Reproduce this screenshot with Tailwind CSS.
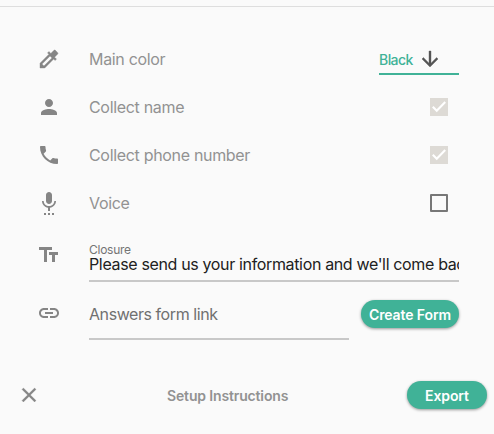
<!DOCTYPE html>
<html lang="en">
<head>
<meta charset="utf-8">
<title>Form settings</title>
<script src="https://cdn.jsdelivr.net/npm/@tailwindcss/browser@4"></script>
</head>
<body class="h-[434px] w-[494px] overflow-hidden bg-[#fafafa] font-[Inter,Roboto,sans-serif] text-[#929292]">
<div class="h-[7px] border-b border-[#dedede]"></div>
<main class="flex flex-col pl-[37px] pr-[35px] pt-7 text-base tracking-[-0.32px]">
  <div class="flex h-12 items-center">
    <svg class="size-6 fill-[#858585] stroke-[#858585] stroke-[0.4]" viewBox="0 0 24 24"><path d="M20.71 5.63l-2.34-2.34c-.39-.39-1.02-.39-1.41 0l-3.12 3.12-1.93-1.91-1.41 1.41 1.42 1.42L3 16.25V21h4.75l8.92-8.92 1.42 1.42 1.41-1.41-1.92-1.92 3.12-3.12c.4-.4.4-1.03.01-1.42zM6.92 19L5 17.08l8.06-8.06 1.92 1.92L6.92 19z"/></svg>
    <span class="ml-7 flex-1">Main color</span>
    <div class="flex h-8 w-20 items-center border-b-2 border-[#40b297] pt-0.5">
      <span class="w-[39px] whitespace-nowrap pt-px text-sm font-medium tracking-[-0.55px] text-[#40b297]">Black</span>
      <svg class="size-6 fill-[#555] stroke-[#555] stroke-[0.4]" viewBox="0 0 24 24"><path d="M20 12l-1.41-1.41L13 16.17V4h-2v12.17l-5.58-5.59L4 12l8 8 8-8z"/></svg>
    </div>
  </div>
  <div class="flex h-12 items-center pr-[11px]">
    <svg class="size-6 fill-[#858585]" viewBox="0 0 24 24"><path d="M12 12c2.21 0 4-1.79 4-4s-1.79-4-4-4-4 1.79-4 4 1.79 4 4 4zm0 2c-2.67 0-8 1.34-8 4v2h16v-2c0-2.66-5.33-4-8-4z"/></svg>
    <span class="ml-7 flex-1">Collect name</span>
    <svg class="size-[18px] bg-[#dddad5]" viewBox="0 0 24 24" fill="none" stroke="#fff" stroke-width="2.8"><path d="M3.7 11.6l5.3 5.3L20.3 5.2"/></svg>
  </div>
  <div class="flex h-12 items-center pr-[11px]">
    <svg class="size-6 fill-[#858585]" viewBox="0 0 24 24"><path d="M6.62 10.79c1.44 2.83 3.76 5.14 6.59 6.59l2.2-2.2c.27-.27.67-.36 1.02-.24 1.12.37 2.33.57 3.57.57.55 0 1 .45 1 1V20c0 .55-.45 1-1 1-9.39 0-17-7.61-17-17 0-.55.45-1 1-1h3.5c.55 0 1 .45 1 1 0 1.25.2 2.45.57 3.57.11.35.03.74-.25 1.02l-2.2 2.2z"/></svg>
    <span class="ml-7 flex-1">Collect phone number</span>
    <svg class="size-[18px] bg-[#dddad5]" viewBox="0 0 24 24" fill="none" stroke="#fff" stroke-width="2.8"><path d="M3.7 11.6l5.3 5.3L20.3 5.2"/></svg>
  </div>
  <div class="flex h-12 items-center pr-[11px]">
    <svg class="size-6 fill-[#858585]" viewBox="0 0 24 24"><path d="M7 24h2v-2H7v2zm5-11c1.66 0 2.99-1.34 2.99-3L15 4c0-1.66-1.34-3-3-3S9 2.34 9 4v6c0 1.66 1.34 3 3 3zm-1 11h2v-2h-2v2zm4 0h2v-2h-2v2zm4-14h-1.7c0 3-2.54 5.1-5.3 5.1S6.7 13 6.7 10H5c0 3.41 2.72 6.23 6 6.72V20h2v-3.28c3.28-.49 6-3.31 6-6.72z"/></svg>
    <span class="ml-7 flex-1">Voice</span>
    <span class="size-[18px] rounded-[1px] border-2 border-[#777]"></span>
  </div>
  <div class="flex h-[55px] items-start">
    <svg class="mt-4 size-6 shrink-0 fill-[#858585]" viewBox="0 0 24 24"><path d="M2 4v3h5v12h3V7h5V4H2zm19 5h-9v3h3v7h3v-7h3V9z"/></svg>
    <div class="ml-7 h-[55px] w-[370px] overflow-hidden border-b-2 border-[#c8c8c8] pt-[17px]">
      <div class="h-3 text-xs leading-3 tracking-[-0.25px] text-[#747474]">Closure</div>
      <div class="-mt-px whitespace-nowrap leading-[18px] tracking-[-0.35px] text-[#212121]">Please send us your information and we'll come back</div>
    </div>
  </div>
  <div class="flex h-[58px] items-start">
    <svg class="mt-[19px] size-6 fill-[#858585]" viewBox="0 0 24 24"><path d="M3.9 12c0-1.71 1.39-3.1 3.1-3.1h4V7H7c-2.76 0-5 2.24-5 5s2.24 5 5 5h4v-1.9H7c-1.71 0-3.1-1.39-3.1-3.1zM8 13h8v-2H8v2zm9-6h-4v1.9h4c1.71 0 3.1 1.39 3.1 3.1s-1.39 3.1-3.1 3.1h-4V17h4c2.76 0 5-2.24 5-5s-2.24-5-5-5z"/></svg>
    <div class="ml-7 h-[58px] w-[260px] border-b-2 border-[#c8c8c8] pt-5 tracking-[-0.43px] text-[#707070]">Answers form link</div>
    <button class="ml-3 mt-[18px] h-7 w-[98px] whitespace-nowrap rounded-full bg-[#40b297] pt-0.5 text-sm font-semibold tracking-[-0.1px] text-white shadow-[0_1px_3px_rgba(0,0,0,0.4)]">Create Form</button>
  </div>
</main>
<footer class="mt-[41px] flex h-7 items-center pl-[17px] pr-[7px]">
  <svg class="size-6 fill-[#858585] stroke-[#858585] stroke-[0.3]" viewBox="0 0 24 24"><path d="M19 6.41L17.59 5 12 10.59 6.41 5 5 6.41 10.59 12 5 17.59 6.41 19 12 13.41 17.59 19 19 17.59 13.41 12z"/></svg>
  <span class="ml-[126px] flex-1 pt-0.5 text-sm font-semibold tracking-[-0.15px]">Setup Instructions</span>
  <button class="h-7 w-20 rounded-full bg-[#40b297] pt-0.5 text-sm font-semibold tracking-[-0.1px] text-white shadow-[0_1px_3px_rgba(0,0,0,0.4)]">Export</button>
</footer>
</body>
</html>
